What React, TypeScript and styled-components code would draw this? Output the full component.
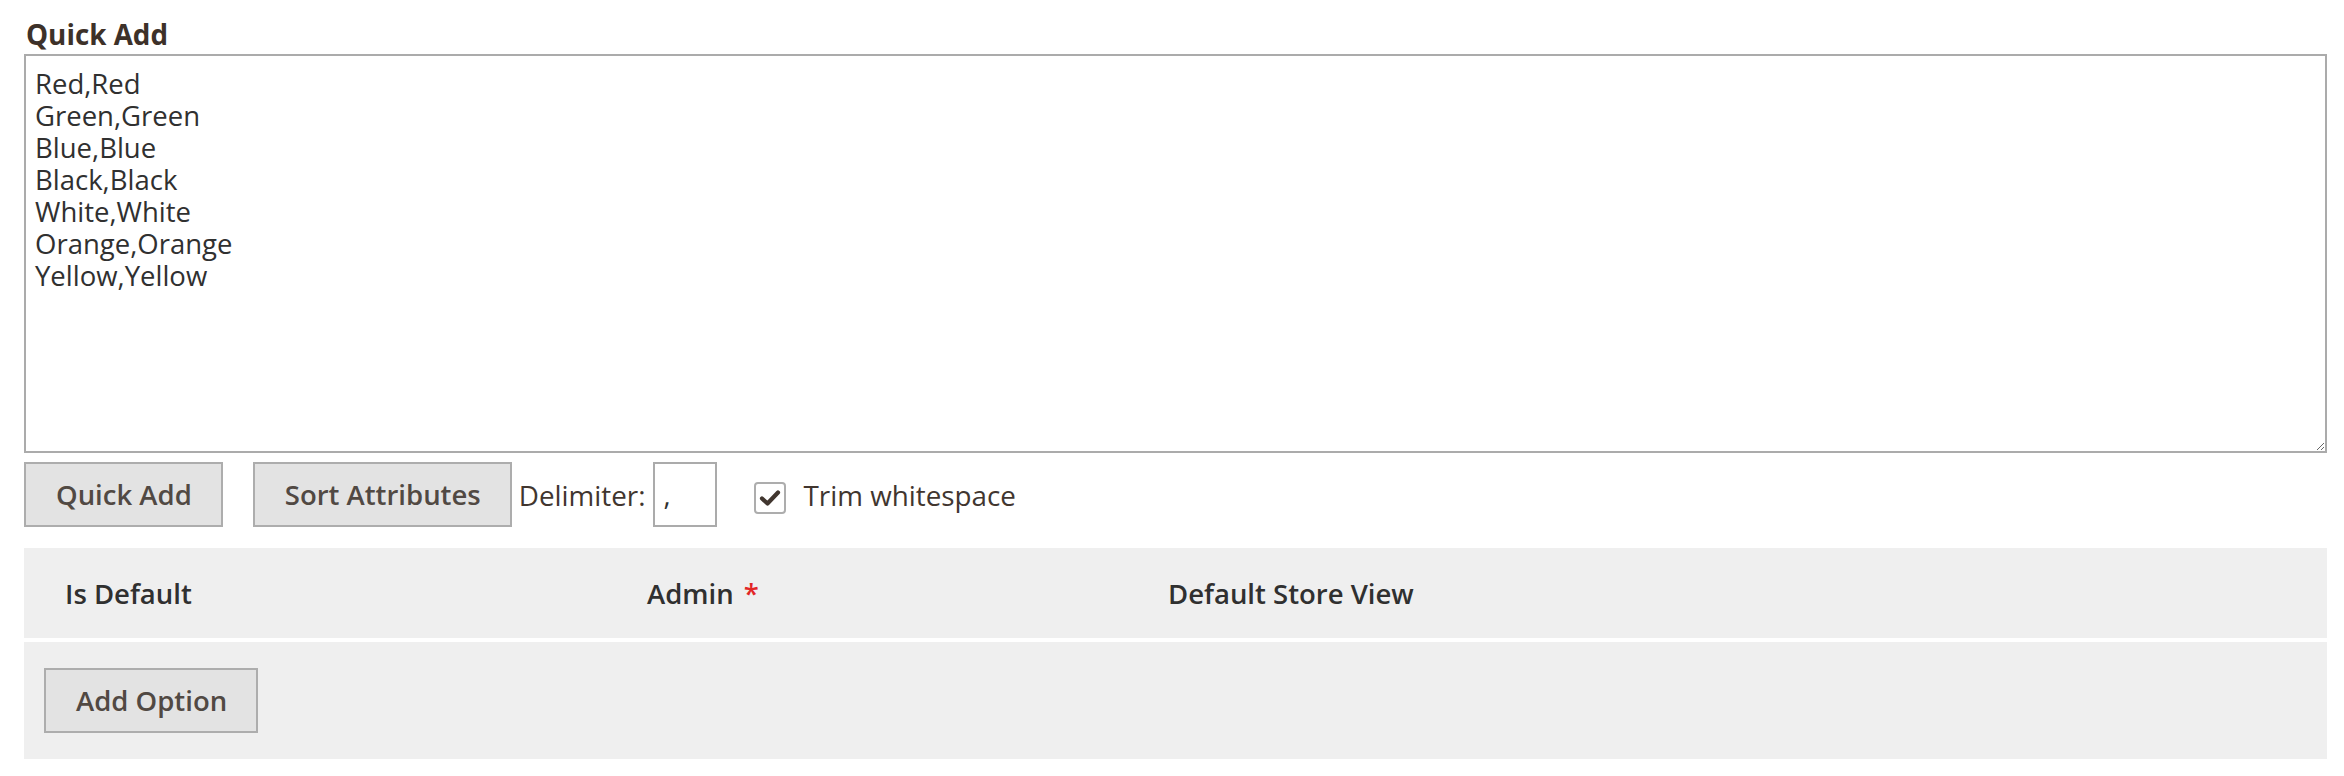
import React from "react";
import styled, { createGlobalStyle } from "styled-components";

const GlobalStyle = createGlobalStyle`
  html, body {
    margin: 0;
    padding: 0;
    background: #ffffff;
  }
  body {
    font-family: "Open Sans", "Noto Sans", "Liberation Sans", sans-serif;
    color: #303030;
  }
  * { box-sizing: border-box; }
`;

const Page = styled.div`
  padding: 16px 17px 0 24px;
  width: 2344px;
`;

const Title = styled.div`
  font-size: 27.8px;
  font-weight: 700;
  line-height: 37px;
  color: #3d3129;
  margin: 0 0 1px 2px;
`;

const QuickText = styled.textarea`
  display: block;
  width: 100%;
  height: 399px;
  margin: 0;
  border: 2px solid #ababab;
  border-radius: 0;
  padding: 12px 9px 9px;
  font-family: "Open Sans", "Noto Sans", sans-serif;
  font-size: 27.5px;
  line-height: 32px;
  color: #303030;
  outline: none;
  background: #fff;
`;

const ActionRow = styled.div`
  display: flex;
  align-items: center;
  margin-top: 9px;
  height: 65px;
  font-size: 27.8px;
  color: #41362f;
`;

const Button = styled.button<{ $gapRight?: number }>`
  height: 65px;
  padding: 0 29px 0 30px;
  margin: 0 ${(p) => p.$gapRight ?? 0}px 0 0;
  background: #e3e3e3;
  border: 2px solid #adadad;
  border-radius: 0;
  font-family: "Open Sans", "Noto Sans", sans-serif;
  font-size: 27.5px;
  font-weight: 600;
  color: #514943;
  cursor: pointer;
  white-space: nowrap;
`;

const FieldLabel = styled.span`
  margin: 0 8px 0 7px;
  white-space: nowrap;
`;

const DelimiterInput = styled.input`
  width: 64px;
  height: 65px;
  border: 2px solid #ababab;
  padding: 0 8px;
  font-family: "Open Sans", "Noto Sans", sans-serif;
  font-size: 27.5px;
  color: #303030;
  outline: none;
  background: #fff;
`;

const CheckWrap = styled.label`
  display: flex;
  align-items: center;
  margin-left: 37px;
  cursor: pointer;
`;

const CheckBox = styled.span`
  display: flex;
  align-items: center;
  justify-content: center;
  width: 32px;
  height: 32px;
  margin-top: 6px;
  border: 2px solid #adadad;
  border-radius: 4px;
  background: #fff;
`;

const CheckText = styled.span`
  margin-left: 17px;
  color: #41362f;
  white-space: nowrap;
`;

const Table = styled.div`
  margin-top: 21px;
  display: flex;
  flex-direction: column;
  gap: 4px;
`;

const HeaderRow = styled.div`
  display: grid;
  grid-template-columns: 582px 521px 1fr;
  align-items: center;
  height: 90px;
  background: #efefef;
`;

const HeaderCell = styled.div`
  padding-left: 41px;
  font-size: 27.5px;
  font-weight: 600;
  color: #303030;
  white-space: nowrap;
`;

const Required = styled.span`
  color: #e22626;
  margin-left: 10px;
`;

const BodyRow = styled.div`
  background: #efefef;
  padding: 26px 20px;
`;

const CheckMark = () => (
  <svg width="22" height="18" viewBox="0 0 22 18">
    <path
      d="M3 9.5 L8.5 14.5 L19 3.5"
      fill="none"
      stroke="#41362f"
      strokeWidth="4.2"
      strokeLinecap="round"
      strokeLinejoin="round"
    />
  </svg>
);

const initialText = [
  "Red,Red",
  "Green,Green",
  "Blue,Blue",
  "Black,Black",
  "White,White",
  "Orange,Orange",
  "Yellow,Yellow",
].join("\n");

export default function App() {
  return (
    <>
      <GlobalStyle />
      <Page>
        <Title>Quick Add</Title>
        <QuickText defaultValue={initialText} spellCheck={false} />
        <ActionRow>
          <Button $gapRight={30}>Quick Add</Button>
          <Button>Sort Attributes</Button>
          <FieldLabel>Delimiter:</FieldLabel>
          <DelimiterInput defaultValue="," />
          <CheckWrap>
            <CheckBox>
              <CheckMark />
            </CheckBox>
            <CheckText>Trim whitespace</CheckText>
          </CheckWrap>
        </ActionRow>
        <Table>
          <HeaderRow>
            <HeaderCell>Is Default</HeaderCell>
            <HeaderCell>
              Admin<Required>*</Required>
            </HeaderCell>
            <HeaderCell>Default Store View</HeaderCell>
          </HeaderRow>
          <BodyRow>
            <Button>Add Option</Button>
          </BodyRow>
        </Table>
      </Page>
    </>
  );
}
